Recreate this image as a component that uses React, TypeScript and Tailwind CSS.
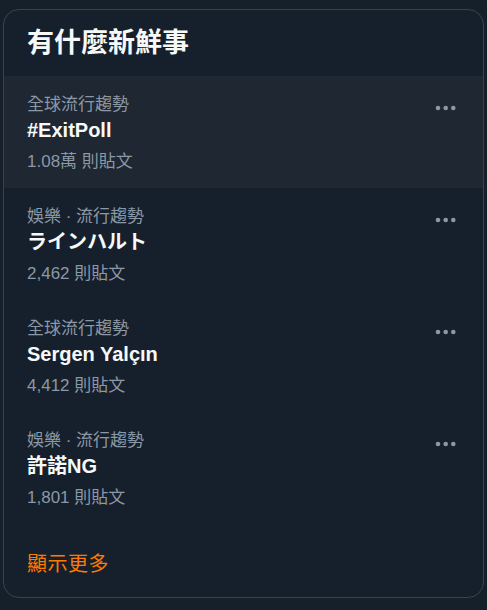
import React from 'react';

interface Trend {
  category: string;
  title: string;
  count: string;
  hover?: boolean;
}

const trends: Trend[] = [
  { category: '全球流行趨勢', title: '#ExitPoll', count: '1.08萬 則貼文', hover: true },
  { category: '娛樂 · 流行趨勢', title: 'ラインハルト', count: '2,462 則貼文' },
  { category: '全球流行趨勢', title: 'Sergen Yalçın', count: '4,412 則貼文' },
  { category: '娛樂 · 流行趨勢', title: '許諾NG', count: '1,801 則貼文' },
];

const font = { fontFamily: '"Liberation Sans", "Noto Sans CJK TC", sans-serif' };

const MoreDots = () => (
  <svg width="22" height="6" viewBox="0 0 22 6" className="fill-[#8b98a5]">
    <circle cx="3" cy="3" r="2.3" />
    <circle cx="10.7" cy="3" r="2.3" />
    <circle cx="18.3" cy="3" r="2.3" />
  </svg>
);

const TrendRow: React.FC<{ trend: Trend }> = ({ trend }) => (
  <div className={`flex justify-between px-[23px] pt-[17px] h-[112px] ${trend.hover ? 'bg-[#1e2732]' : ''}`}>
    <div className="flex flex-col">
      <span className="text-[17px] leading-[24px] text-[#8b98a5]">{trend.category}</span>
      <span className="text-[20px] leading-[30px] font-bold text-[#f7f9f9] -mt-[2px]">{trend.title}</span>
      <span className="text-[17px] leading-[24px] text-[#8b98a5] mt-[5px]">{trend.count}</span>
    </div>
    <div className="pt-[12px] pr-[3px]">
      <MoreDots />
    </div>
  </div>
);

export default function App() {
  return (
    <div className="w-[487px] h-[610px] bg-[#15202b] pt-[9px] px-[3px] overflow-hidden" style={font}>
      <div className="w-[481px] h-[589px] border border-[#38444d] rounded-2xl bg-[#16202c] overflow-hidden flex flex-col">
        <div className="h-[66px] px-[23px] flex items-center">
          <h2 className="text-[27px] font-bold text-[#f7f9f9] leading-none pt-[1px]">有什麼新鮮事</h2>
        </div>
        {trends.map((t) => (
          <TrendRow key={t.title} trend={t} />
        ))}
        <div className="flex-1 px-[23px] flex items-center">
          <span className="text-[20px] text-[#ff7a00] tracking-[0.5px] pt-[7px]">顯示更多</span>
        </div>
      </div>
    </div>
  );
}
